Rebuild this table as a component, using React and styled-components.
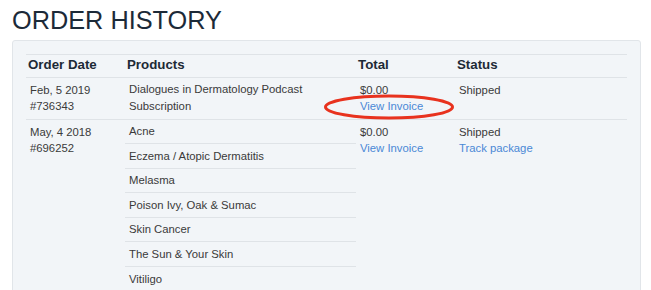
import styled, { createGlobalStyle } from 'styled-components'

const Global = createGlobalStyle`
  body {
    margin: 0;
    background: #ffffff;
    font-family: "Liberation Sans", Arial, sans-serif;
  }
`

const Page = styled.div`
  padding: 5px 10px 0 12px;
`

const Title = styled.h1`
  margin: 0 0 5px 0;
  font-size: 25.3px;
  line-height: 30px;
  font-weight: normal;
  color: #1c2a38;
`

const Panel = styled.div`
  position: relative;
  width: 629px;
  box-sizing: border-box;
  background: #f2f5f8;
  border: 1px solid #e1e5e9;
  border-radius: 3px;
  padding: 13px 13px 20px 13px;
`

const Table = styled.table`
  width: 601px;
  table-layout: fixed;
  border-collapse: collapse;
  border-top: 1px solid #dfe3e7;
`

const Th = styled.th`
  text-align: left;
  font-size: 13.3px;
  line-height: 16.5px;
  font-weight: bold;
  color: #1d2a36;
  padding: 2px 2px 3px 2px;
  border-bottom: 1px solid #dfe3e7;
`

const Row = styled.tr`
  border-bottom: ${p => (p.last ? 'none' : '1px solid #dfe3e7')};
`

const Td = styled.td`
  vertical-align: top;
  font-size: 11.3px;
  line-height: 16.5px;
  color: #3a3a3a;
  padding: ${p => (p.flush ? '0' : '4px 4px')};
`

const ProductList = styled.ul`
  list-style: none;
  margin: 0;
  padding: 0;
`

const Product = styled.li`
  padding: 3.6px 4px 3.5px 4px;
  border-bottom: ${p => (p.last ? 'none' : '1px solid #dfe3e7')};
`

const Link = styled.a`
  display: block;
  color: #4a88d6;
  text-decoration: none;
`

const Ellipse = styled.svg`
  position: absolute;
  left: 311px;
  top: 53px;
  overflow: visible;
  pointer-events: none;
`

const orders = [
  {
    date: 'Feb, 5 2019',
    id: '#736343',
    products: ['Dialogues in Dermatology Podcast Subscription'],
    total: '$0.00',
    status: 'Shipped',
    track: false,
  },
  {
    date: 'May, 4 2018',
    id: '#696252',
    products: [
      'Acne',
      'Eczema / Atopic Dermatitis',
      'Melasma',
      'Poison Ivy, Oak & Sumac',
      'Skin Cancer',
      'The Sun & Your Skin',
      'Vitiligo',
    ],
    total: '$0.00',
    status: 'Shipped',
    track: true,
  },
]

export default function App() {
  return (
    <Page>
      <Global />
      <Title>ORDER HISTORY</Title>
      <Panel>
        <Table>
          <colgroup>
            <col style={{ width: 99 }} />
            <col style={{ width: 231 }} />
            <col style={{ width: 99 }} />
            <col style={{ width: 172 }} />
          </colgroup>
          <thead>
            <tr>
              <Th>Order Date</Th>
              <Th>Products</Th>
              <Th>Total</Th>
              <Th>Status</Th>
            </tr>
          </thead>
          <tbody>
            {orders.map((o, i) => (
              <Row key={o.id} last={i === orders.length - 1}>
                <Td>
                  {o.date}
                  <br />
                  {o.id}
                </Td>
                <Td flush>
                  <ProductList>
                    {o.products.map((p, j) => (
                      <Product key={p} last={j === o.products.length - 1}>
                        {p}
                      </Product>
                    ))}
                  </ProductList>
                </Td>
                <Td>
                  {o.total}
                  <Link href="#">View Invoice</Link>
                </Td>
                <Td>
                  {o.status}
                  {o.track && <Link href="#">Track package</Link>}
                </Td>
              </Row>
            ))}
          </tbody>
        </Table>
        <Ellipse width="130" height="26" viewBox="0 0 130 26">
          <ellipse cx="65" cy="13" rx="63.5" ry="11" fill="none" stroke="#e8321e" strokeWidth="3" />
        </Ellipse>
      </Panel>
    </Page>
  )
}
